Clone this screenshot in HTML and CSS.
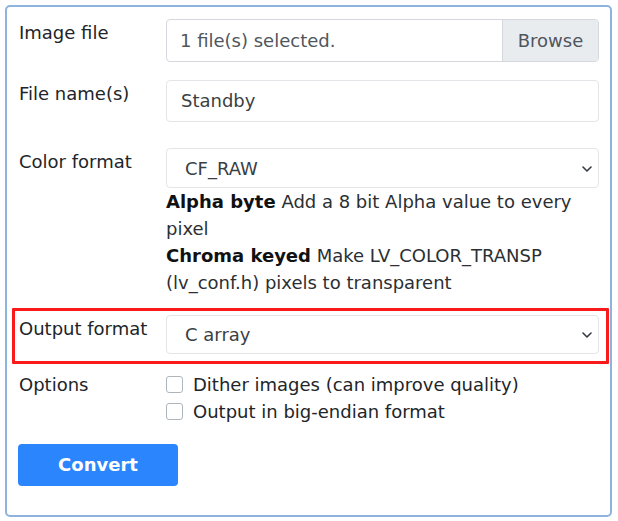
FILE: index.html
```html
<!DOCTYPE html>
<html>
<head>
<meta charset="utf-8">
<link rel="stylesheet" href="styles.css">
</head>
<body>
<div class="panel">
  <div class="row row-file">
    <div class="label">Image file</div>
    <div class="control">
      <div class="file-input">
        <span class="file-text">1 file(s) selected.</span>
        <span class="browse">Browse</span>
      </div>
    </div>
  </div>
  <div class="row row-name">
    <div class="label">File name(s)</div>
    <div class="control">
      <div class="text-input">Standby</div>
    </div>
  </div>
  <div class="row row-color">
    <div class="label">Color format</div>
    <div class="control">
      <div class="select">
        <span>CF_RAW</span>
        <svg class="chev" width="10" height="6" viewBox="0 0 10 6"><path d="M1 1 L5 5 L9 1" fill="none" stroke="#343a40" stroke-width="1.6" stroke-linecap="round" stroke-linejoin="round"/></svg>
      </div>
      <div class="help"><b>Alpha byte</b> Add a 8 bit Alpha value to every pixel</div>
      <div class="help"><b>Chroma keyed</b> Make LV_COLOR_TRANSP (lv_conf.h) pixels to transparent</div>
    </div>
  </div>
  <div class="row row-output highlight">
    <div class="label">Output format</div>
    <div class="control">
      <div class="select select-out">
        <span>C array</span>
        <svg class="chev" width="10" height="6" viewBox="0 0 10 6"><path d="M1 1 L5 5 L9 1" fill="none" stroke="#343a40" stroke-width="1.6" stroke-linecap="round" stroke-linejoin="round"/></svg>
      </div>
    </div>
  </div>
  <div class="row row-options">
    <div class="label">Options</div>
    <div class="control">
      <div class="check"><span class="box"></span><span>Dither images (can improve quality)</span></div>
      <div class="check"><span class="box"></span><span>Output in big-endian format</span></div>
    </div>
  </div>
  <div class="actions">
    <div class="btn">Convert</div>
  </div>
</div>
</body>
</html>
```

FILE: styles.css
```css
* { box-sizing: border-box; }
html, body { margin: 0; padding: 0; background: #ffffff; }
body {
  font-family: "DejaVu Sans", "Noto Sans", sans-serif;
  font-size: 18px;
  line-height: 27px;
  color: #212529;
}
.panel {
  margin: 5px 0 0 5px;
  width: 607px;
  height: 512px;
  border: 2px solid #8db3de;
  border-radius: 5px;
  padding: 10px 1px 29px 5px;
}
.row {
  display: flex;
  border: 2px solid transparent;
  padding: 0 8px 0 5px;
}
.label {
  width: 147px;
  flex: none;
}
.control {
  flex: 1;
  min-width: 0;
}
.row-name { margin-top: 14px; }
.row-color { margin-top: 22px; }
.row-options { margin-top: 5px; }
.highlight {
  margin-top: 10px;
  border: 3px solid #fb1a1a;
  border-radius: 1px;
  padding: 4px 7px 7px 4px;
}

.file-input {
  display: flex;
  height: 43px;
  border: 1px solid #d5d8dc;
  border-radius: 4px;
  overflow: hidden;
  color: #4f565d;
}
.file-text {
  flex: 1;
  padding-left: 13px;
  line-height: 41px;
}
.browse {
  width: 96px;
  flex: none;
  text-align: center;
  background: #e9ecef;
  border-left: 1px solid #d5d8dc;
  line-height: 41px;
}
.text-input {
  height: 42px;
  border: 1px solid #e3e5e8;
  border-radius: 4px;
  padding-left: 14px;
  line-height: 40px;
  color: #3a3f44;
}
.select {
  display: flex;
  align-items: center;
  justify-content: space-between;
  height: 40px;
  border: 1px solid #e3e5e8;
  border-radius: 4px;
  padding: 0 6px 0 18px;
  color: #3a3f44;
}
.select-out { height: 39px; }
.chev { flex: none; margin-top: 1px; }
.help { color: #2b2f33; }
.help b { color: #111; }

.check {
  display: flex;
  align-items: center;
  gap: 10px;
}
.box {
  width: 17px;
  height: 17px;
  border: 1px solid #adb5bd;
  border-radius: 3px;
  background: #fff;
  flex: none;
}

.actions {
  margin-top: 17px;
  padding-left: 6px;
}
.btn {
  width: 160px;
  height: 42px;
  background: #2b86fd;
  border-radius: 4px;
  color: #ffffff;
  font-weight: bold;
  text-align: center;
  line-height: 42px;
}
```
